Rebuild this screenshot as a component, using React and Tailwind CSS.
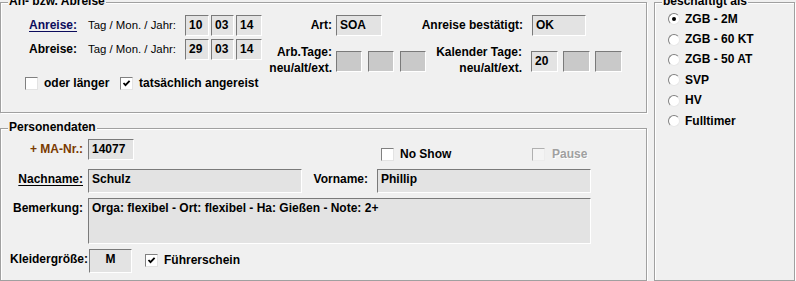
import React from "react";

const Group = ({ title, className, children }) => (
  <div
    className={`relative border border-[#a0a0a0] shadow-[inset_1px_1px_0_#fff,1px_1px_0_#fff] ${className}`}
  >
    <span className="absolute left-[7px] top-[-9px] px-[1px] bg-[#f0f0f0] leading-[15px] whitespace-nowrap">
      {title}
    </span>
    {children}
  </div>
);

const Box = ({ className, children, dark }) => (
  <div
    className={`${className} shrink-0 border border-t-[#7a7a7a] border-l-[#7a7a7a] border-r-white border-b-white ${
      dark ? "bg-[#c9c9c9]" : "bg-[#e3e3e3]"
    } pl-[3px] pt-[2px] leading-[15px] whitespace-nowrap overflow-hidden`}
  >
    {children}
  </div>
);

const Check = ({ checked, disabled }) => (
  <div
    className={`w-[13px] h-[13px] shrink-0 border ${
      disabled
        ? "border-t-[#b0b0b0] border-l-[#b0b0b0] border-r-[#ececec] border-b-[#ececec] bg-[#f4f4f4]"
        : "border-t-[#808080] border-l-[#808080] border-r-[#e3e3e3] border-b-[#e3e3e3] bg-white"
    } flex items-center justify-center`}
  >
    {checked && (
      <svg width="9" height="9" viewBox="0 0 9 9">
        <path d="M1.5 4 L3.5 6.2 L7.6 1.8" fill="none" stroke="#000" strokeWidth="1.8" />
      </svg>
    )}
  </div>
);

const Radio = ({ checked }) => (
  <div className="w-[12px] h-[12px] shrink-0 rounded-full border border-t-[#808080] border-l-[#808080] border-r-[#e8e8e8] border-b-[#e8e8e8] bg-white flex items-center justify-center">
    {checked && <div className="w-[4px] h-[4px] rounded-full bg-black" />}
  </div>
);

const RadioRow = ({ checked, children }) => (
  <div className="h-[20.4px] flex items-center">
    <Radio checked={checked} />
    <span className="ml-[5px] whitespace-nowrap">{children}</span>
  </div>
);

export default function App() {
  return (
    <div className="w-[796px] h-[281px] overflow-hidden bg-[#f0f0f0] font-['Liberation_Sans',Arial,sans-serif] text-[12px] font-bold leading-[15px] text-black pt-[2px] flex">
      <div className="w-[647px] flex flex-col gap-[15px]">
        <Group title="An- bzw. Abreise" className="h-[111px] pt-[12px] pl-[24px]">
          <div className="flex">
            <div className="ml-[4px] w-[233px] flex flex-col gap-[3px]">
              <div className="flex items-start h-[21px]">
                <span className="w-[59px] pt-[3px] underline underline-offset-[2px] text-[#0c0c5c]">Anreise:</span>
                <span className="w-[97px] pt-[3px] font-normal text-[11.4px]">Tag / Mon. / Jahr:</span>
                <div className="flex gap-[2px]">
                  <Box className="w-[24px] h-[21px]">10</Box>
                  <Box className="w-[23px] h-[21px]">03</Box>
                  <Box className="w-[26px] h-[21px]">14</Box>
                </div>
              </div>
              <div className="flex items-start h-[21px]">
                <span className="w-[59px] pt-[3px]">Abreise:</span>
                <span className="w-[97px] pt-[3px] font-normal text-[11.4px]">Tag / Mon. / Jahr:</span>
                <div className="flex gap-[2px]">
                  <Box className="w-[24px] h-[21px]">29</Box>
                  <Box className="w-[23px] h-[21px]">03</Box>
                  <Box className="w-[26px] h-[21px]">14</Box>
                </div>
              </div>
            </div>

            <div className="w-[164px] flex flex-col">
              <div className="flex items-start h-[21px]">
                <span className="w-[70px] pt-[3px] flex justify-end whitespace-nowrap">Art:</span>
                <Box className="ml-[4px] w-[46px] h-[21px]">SOA</Box>
              </div>
              <div className="flex items-start mt-[8px]">
                <div className="w-[70px] flex flex-col items-end leading-[16px] whitespace-nowrap">
                  <span>Arb.Tage:</span>
                  <span>neu/alt/ext.</span>
                </div>
                <div className="ml-[4px] mt-[7px] flex gap-[6px]">
                  <Box dark className="w-[26px] h-[21px]" />
                  <Box dark className="w-[26px] h-[21px]" />
                  <Box dark className="w-[26px] h-[21px]" />
                </div>
              </div>
            </div>

            <div className="w-[196px] flex flex-col">
              <div className="flex items-start h-[21px]">
                <span className="w-[97px] pt-[3px] flex justify-end whitespace-nowrap">Anreise bestätigt:</span>
                <Box className="ml-[9px] w-[54px] h-[21px]">OK</Box>
              </div>
              <div className="flex items-start mt-[8px]">
                <div className="w-[97px] flex flex-col items-end leading-[16px] whitespace-nowrap">
                  <span>Kalender Tage:</span>
                  <span>neu/alt/ext.</span>
                </div>
                <div className="ml-[9px] mt-[7px] flex gap-[5px]">
                  <Box className="w-[27px] h-[21px]">20</Box>
                  <Box dark className="w-[27px] h-[21px]" />
                  <Box dark className="w-[27px] h-[21px]" />
                </div>
              </div>
            </div>
          </div>

          <div className="mt-[1px] flex items-center h-[13px]">
            <Check />
            <span className="ml-[6px] w-[76px] whitespace-nowrap">oder länger</span>
            <Check checked />
            <span className="ml-[6px] whitespace-nowrap">tatsächlich angereist</span>
          </div>
        </Group>

        <Group title="Personendaten" className="h-[153px] pt-[10px]">
          <div className="flex items-start">
            <span className="w-[82px] pt-[3px] flex justify-end whitespace-nowrap text-[#7a3a00]">+ MA-Nr.:</span>
            <Box className="ml-[5px] w-[46px] h-[21px]">14077</Box>
            <div className="ml-[247px] mt-[9px] flex items-center h-[13px]">
              <Check />
              <span className="ml-[6px] w-[132px] whitespace-nowrap">No Show</span>
              <Check disabled />
              <span className="ml-[7px] whitespace-nowrap text-[#a0a0a0] [text-shadow:1px_1px_0_#fff]">Pause</span>
            </div>
          </div>

          <div className="mt-[8px] flex items-start">
            <span className="w-[82px] pt-[3px] flex justify-end whitespace-nowrap underline underline-offset-[2px]">Nachname:</span>
            <Box className="ml-[5px] w-[214px] h-[24px]">Schulz</Box>
            <span className="w-[66px] pt-[3px] flex justify-end whitespace-nowrap">Vorname:</span>
            <Box className="ml-[9px] w-[214px] h-[24px]">Phillip</Box>
          </div>

          <div className="mt-[5px] flex items-start">
            <span className="w-[82px] pt-[3px] flex justify-end whitespace-nowrap">Bemerkung:</span>
            <Box className="ml-[5px] w-[503px] h-[46px]">Orga: flexibel - Ort: flexibel - Ha: Gießen - Note: 2+</Box>
          </div>

          <div className="mt-[5px] flex items-start">
            <span className="ml-[9px] w-[79px] pt-[3px] whitespace-nowrap">Kleidergröße:</span>
            <Box className="w-[43px] h-[24px] text-center !pl-0">M</Box>
            <div className="ml-[13px] mt-[5px] flex items-center h-[13px]">
              <Check checked />
              <span className="ml-[6px] whitespace-nowrap">Führerschein</span>
            </div>
          </div>
        </Group>
      </div>

      <Group title="beschäftigt als" className="ml-[7px] w-[141px] h-[279px] pt-[6px] pl-[13px]">
        <RadioRow checked>ZGB - 2M</RadioRow>
        <RadioRow>ZGB - 60 KT</RadioRow>
        <RadioRow>ZGB - 50 AT</RadioRow>
        <RadioRow>SVP</RadioRow>
        <RadioRow>HV</RadioRow>
        <RadioRow>Fulltimer</RadioRow>
      </Group>
    </div>
  );
}
